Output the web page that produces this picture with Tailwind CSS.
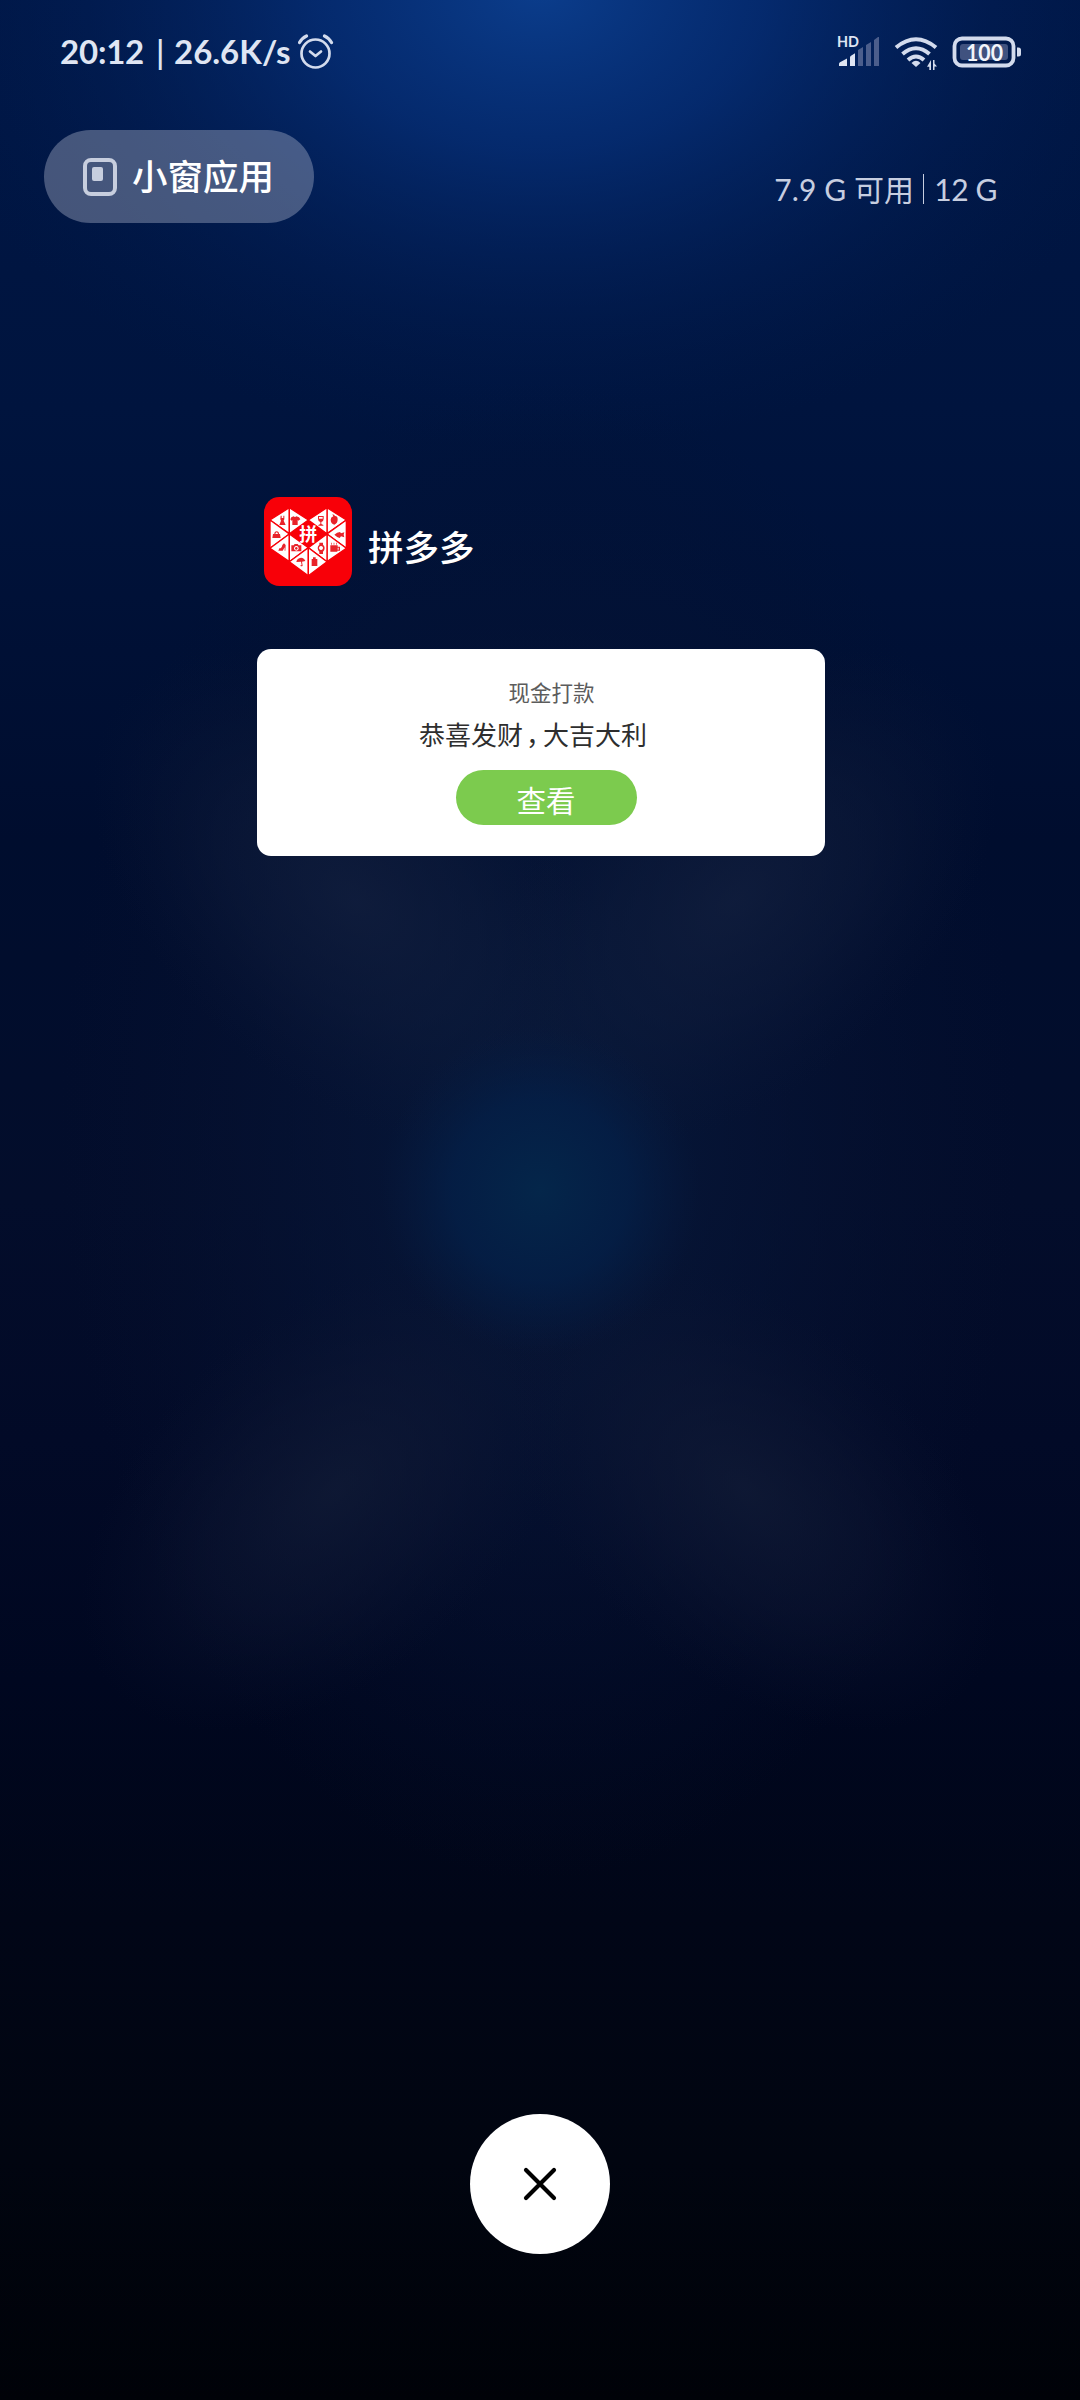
<!DOCTYPE html>
<html lang="zh-CN">
<head>
<meta charset="utf-8">
<title>最近任务</title>
<script src="https://cdn.jsdelivr.net/npm/@tailwindcss/browser@4"></script>
</head>
<body class="bg-[#010512]">
<div class="relative isolate flex h-[2400px] w-[1080px] flex-col overflow-hidden font-['Lato','Noto_Sans_CJK_SC',sans-serif]">
  <!-- wallpaper -->
  <svg class="absolute inset-0 -z-10" width="1080" height="2400" viewBox="0 0 1080 2400">
    <defs>
      <linearGradient id="base" x1="0" y1="0" x2="0" y2="1">
        <stop offset="0" stop-color="#001747"/><stop offset=".17" stop-color="#00143e"/><stop offset=".35" stop-color="#000d2e"/>
        <stop offset=".5" stop-color="#030d2b"/><stop offset=".6" stop-color="#020a27"/><stop offset=".7" stop-color="#000720"/><stop offset=".8" stop-color="#010617"/><stop offset=".9" stop-color="#010510"/><stop offset="1" stop-color="#000208"/>
      </linearGradient>
      <radialGradient id="top"><stop offset="0" stop-color="#0b3d8c"/><stop offset=".35" stop-color="#06307a" stop-opacity=".75"/><stop offset=".7" stop-color="#03235f" stop-opacity=".35"/><stop offset="1" stop-color="#001a4c" stop-opacity="0"/></radialGradient>
      <radialGradient id="core"><stop offset="0" stop-color="#04264a"/><stop offset=".55" stop-color="#041f47" stop-opacity=".8"/><stop offset="1" stop-color="#061b40" stop-opacity="0"/></radialGradient>
      <radialGradient id="arm"><stop offset="0" stop-color="#121f3e" stop-opacity=".9"/><stop offset=".5" stop-color="#0f1c3b" stop-opacity=".55"/><stop offset="1" stop-color="#0b1736" stop-opacity="0"/></radialGradient>
      <radialGradient id="lower"><stop offset="0" stop-color="#111b36" stop-opacity=".9"/><stop offset=".5" stop-color="#0e1733" stop-opacity=".55"/><stop offset="1" stop-color="#0a132f" stop-opacity="0"/></radialGradient>
      <radialGradient id="haze"><stop offset="0" stop-color="#071a3c" stop-opacity=".95"/><stop offset=".5" stop-color="#071536" stop-opacity=".55"/><stop offset="1" stop-color="#07122f" stop-opacity="0"/></radialGradient>
    </defs>
    <rect width="1080" height="2400" fill="url(#base)"/>
    <ellipse cx="540" cy="-10" rx="640" ry="460" fill="url(#top)"/>
    <ellipse cx="540" cy="1130" rx="480" ry="750" fill="url(#haze)"/>
    <ellipse cx="355" cy="900" rx="310" ry="190" fill="url(#arm)" opacity=".85" transform="rotate(42 355 900)"/>
    <ellipse cx="735" cy="900" rx="310" ry="190" fill="url(#arm)" opacity=".85" transform="rotate(-42 735 900)"/>
    <ellipse cx="335" cy="1490" rx="300" ry="180" fill="url(#lower)" opacity=".85" transform="rotate(-42 335 1490)"/>
    <ellipse cx="745" cy="1490" rx="300" ry="180" fill="url(#lower)" opacity=".85" transform="rotate(42 745 1490)"/>
    <ellipse cx="540" cy="1190" rx="160" ry="165" fill="url(#core)"/>
  </svg>

  <header class="flex h-[104px] items-center justify-between pr-[59px] pl-[60px] text-[#dfe5f3]">
    <div class="flex items-center">
      <div class="flex w-[238px] text-[33px] font-bold whitespace-nowrap"><span class="w-[96px] tracking-[-0.200px]">20:12</span><span class="w-[18px] font-semibold">|</span><span>26.6K/s</span></div>
      <svg width="36" height="36" viewBox="0 0 36 36" fill="none" stroke="#d3dbed" stroke-width="2.7" stroke-linecap="round" stroke-linejoin="round">
        <circle cx="17.500" cy="19.500" r="14"/><path d="M12 17.500l5.500 4.500 5.500-4.500"/><path d="M1.500 8.500Q4 4 8.500 2M26.500 2Q31 4 33.500 8.500" stroke-width="3.200"/>
      </svg>
    </div>
    <div class="flex items-center">
      <svg width="184" height="36" viewBox="836 34 184 36" class="overflow-visible">
        <text x="836" y="46.500" class="font-['Lato'] text-[15px] font-bold" textLength="22" lengthAdjust="spacingAndGlyphs" fill="#dfe5f3">HD</text>
        <path fill="#dfe5f3" d="M838 66v-2q0-1.200 1-1.700l7-3.800v7.500zM849 66v-8.500q0-1 1-1.700l4-2.600v12.800z"/>
        <path fill="#4c5e8c" d="M857 66V50l5-3v19zM865 66V45l5-3v24zM873 66V40l4-3h1v29z"/>
        <g fill="none" stroke="#d3dbed" stroke-width="4">
          <path d="M895 47.500Q915 31 935 47.500"/><path d="M901.500 54Q915 42.500 928.500 54"/><path d="M907 60Q915 53 923 60"/>
        </g>
        <path fill="#d3dbed" d="M910.500 63q4.500-4.500 9 0l-4.500 4zM930 60v10h-1.700v-3.200h-2.300zM932 70V60h1.500v3.500l2.500 3h-2.500V70z"/>
        <rect x="953.500" y="38.500" width="59" height="27" rx="7.500" fill="none" stroke="#d3dbed" stroke-width="3.800"/>
        <rect x="959" y="44" width="48" height="16" rx="3" fill="#40527f"/>
        <path fill="#d3dbed" d="M1016 47.500h1.500q2.500 0 2.500 2.500v4q0 2.500-2.500 2.500H1016z"/>
        <text x="965" y="60.700" class="font-['Lato'] text-[23px] font-bold" textLength="37" lengthAdjust="spacingAndGlyphs" fill="#f2f5fb">100</text>
      </svg>
    </div>
  </header>

  <div class="flex items-start justify-between pt-[26px] pr-[83px] pl-11">
    <button class="flex h-[93px] w-[270px] items-center rounded-full bg-[#adb4cb]/40 pl-[39px]">
      <svg width="34" height="38" viewBox="0 0 34 38"><rect x="2" y="2" width="30" height="34" rx="6" fill="none" stroke="#c7cede" stroke-width="4"/><rect x="9" y="9" width="11" height="14" rx="2" fill="#c7cede"/></svg>
      <span class="ml-[15px] text-[35.500px] leading-none font-medium text-white">小窗应用</span>
    </button>
    <div class="mt-[40px] flex items-center text-[30px] leading-[38px] whitespace-nowrap text-[#c7cee0]">
      <span class="tracking-[0.100px]">7.9 G 可用</span>
      <span class="mr-2.5 ml-[9px] h-[30px] w-px bg-[#c7cee0]"></span>
      <span class="tracking-[-0.400px]">12 G</span>
    </div>
  </div>

  <main class="mt-[274px] ml-[257px] w-[568px]">
    <div class="flex h-[89px] items-center pl-[7px]">
      <svg width="88" height="89" viewBox="27 36 264 267">
        <rect x="27" y="36" width="264" height="267" rx="46" fill="#f80008"/>
        <g fill="#fff" stroke="#f80008" stroke-width="4">
          <path d="M103 68L45 105L103 146z"/><path d="M103 68L160 105L103 146z"/><path d="M45 105V190L103 147z"/>
          <path d="M103 147V230L45 190z"/><path d="M103 147L160 188L103 230z"/><path d="M103 230L160 188V272z"/>
          <path d="M216 68L274 105L216 146z"/><path d="M216 68L160 105L216 146z"/><path d="M274 105V190L216 147z"/>
          <path d="M216 147V230L274 190z"/><path d="M216 147L160 188L216 230z"/><path d="M216 230L160 188V272z"/>
        </g>
        <g fill="#e8232a">
          <path d="M77 92h3v7h5v-7h3v11l-2 4 6 13H73l5-13-2-4z"/>
          <path d="M109 97l7-3q4 4 8 0l8 3 4 6-6 4-2-2v15h-16v-15l-3 2-3-4z"/>
          <path d="M189 93h17v8q0 8-7 10v6l6 3v2h-15v-2l6-3v-6q-7-2-7-10zM192 96v5h11v-5z" fill-rule="evenodd"/>
          <path d="M235 94l-3-6 5 1 3 4q8 0 8 10 0 13-10 16-11-3-11-15 0-8 8-10z"/>
          <path d="M54 147h4q0-8 7-8t7 8h3l2 12H52zM61 147h8q-1-5-4-5t-4 5z" fill-rule="evenodd"/>
          <path d="M238 149q8-8 17-8l3 4 10-3-2 7 2 8-10-3-4 5q-9-3-16-10z"/>
          <path d="M73 190q7 1 9-10l5-5 5 5-1 17h-2v-10l-6 10H70z"/>
          <path d="M109 181h7l3-4h9l3 4h8v18h-30zM124 183a7 7 0 1 0 .1 0zM124 186a4 4 0 1 1-.1 0z" fill-rule="evenodd"/>
          <path d="M193 173h11v6q5 4 5 10t-5 11v7h-11v-7q-5-5-5-11t5-10zM198 183a6 6 0 1 0 .1 0z" fill-rule="evenodd"/>
          <path d="M226 181h22v4h7v12h-8v3h-21zM248 188v6h3v-6zM229 173h2v6h-2zM236 173h2v6h-2zM243 173h2v6h-2z" fill-rule="evenodd"/>
          <path d="M124 231q2-12 14-13 10 1 13 10l-10 2 2 12q-4 4-7 0l2-2 2 1-2-11z"/>
          <path d="M170 222h4v-5h8v5h5v21h-17z"/>
        </g>
        <text x="133" y="168" class="font-['Noto_Sans_CJK_SC'] text-[54px] font-bold" fill="#fff">拼</text>
      </svg>
      <h1 class="mt-3 ml-4 text-[35.500px] leading-none font-medium text-white">拼多多</h1>
    </div>

    <section class="flex mt-[63px] h-[207px] flex-col items-center rounded-[14px] bg-white pt-[31px] leading-none">
      <p class="ml-[21px] text-[21.500px] leading-[26px] text-[#5c5c5c]">现金打款</p>
      <p class="mt-[13px] -ml-[16px] flex text-[26px] leading-[32px] text-[#2e2e2e]"><span>恭喜发财</span><span class="w-5 pl-[3px] [font-feature-settings:'halt']">，</span><span>大吉大利</span></p>
      <button class="mt-[19px] ml-[10px] h-[55px] w-[181px] rounded-full bg-[#7ccb4e] pt-[6px] text-[29.500px] leading-none text-white">查看</button>
    </section>
  </main>

  <button class="mt-auto mb-[146px] flex size-[140px] items-center justify-center self-center rounded-full bg-white" aria-label="关闭">
    <svg width="34" height="34" viewBox="0 0 34 34" stroke="#000" stroke-width="4.200" stroke-linecap="round"><path d="M3 3l28 28M31 3L3 31"/></svg>
  </button>
</div>
</body>
</html>
